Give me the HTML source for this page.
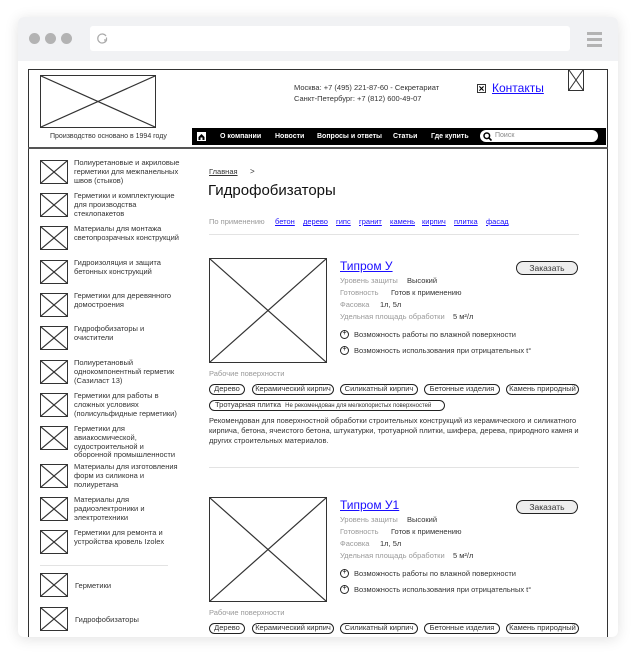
<!DOCTYPE html>
<html><head><meta charset="utf-8"><style>
*{margin:0;padding:0;box-sizing:border-box}
body{width:636px;height:657px;background:#fff;font-family:"Liberation Sans",sans-serif;position:relative;overflow:hidden}
.a{position:absolute}
.win{left:18px;top:17px;width:600px;height:620px;background:#fff;border-radius:6px;box-shadow:0 2px 14px rgba(0,0,0,.12);overflow:hidden}
.bar{left:0;top:0;width:600px;height:44px;background:#f1f2f4}
.dot{width:11px;height:11px;border-radius:50%;background:#b3b3b3;top:16px}
.url{left:72px;top:9px;width:480px;height:25px;background:#fff;border-radius:3px}
.hm{left:569px;width:15px;height:3px;background:#b3b3b3}
.box{left:10px;top:52px;width:580px;height:600px;border:1.5px solid #333}
.x{border:1.5px solid #333;background:#fff}
.x svg{position:absolute;left:0;top:0;width:100%;height:100%}
.t{font-size:7.5px;color:#333;line-height:9px;white-space:nowrap}
.g{color:#999}
.nav{left:174px;top:111px;width:414px;height:17px;background:#000}
.nav span{position:absolute;top:4.5px;color:#fff;font-size:7px;font-weight:bold;white-space:nowrap}
.lnk{color:#1a0dff;text-decoration:underline}
.tag{position:absolute;height:11px;border:1.3px solid #222;border-radius:6px;font-size:7.5px;line-height:8.5px;color:#333;padding:0 5px;white-space:nowrap}
.btn{position:absolute;left:498px;width:62px;height:14px;border:1.3px solid #222;border-radius:7px;background:#eee;font-size:8.5px;text-align:center;line-height:12px;color:#333}
.pl{position:absolute;width:9px;height:9px;border:1.3px solid #222;border-radius:50%;font-size:7px;line-height:6px;text-align:center}
.hr{position:absolute;height:1px;background:#e3e3e3}
</style></head><body>
<div class="a win">
<div class="a bar"></div>
<div class="a dot" style="left:11px"></div><div class="a dot" style="left:27px"></div><div class="a dot" style="left:43px"></div>
<div class="a url"><svg class="a" style="left:6px;top:6px" width="13" height="13" viewBox="0 0 13 13"><path d="M10 4A4.5 4.5 0 1 0 10.5 8" fill="none" stroke="#aaa" stroke-width="1.2"/><path d="M8 8l2.5 0 0-2.5" fill="none" stroke="#aaa" stroke-width="1.2"/></svg></div>
<div class="a hm" style="top:15px"></div><div class="a hm" style="top:21px"></div><div class="a hm" style="top:27px"></div>

<div class="a box"></div>
<div class="a x" style="left:22px;top:58px;width:116px;height:53px"><svg viewBox="0 0 100 100" preserveAspectRatio="none"><path d="M0 0L100 100M100 0L0 100" stroke="#333" stroke-width="1.2" vector-effect="non-scaling-stroke"/></svg></div>
<div class="a t" style="left:32px;top:115px;font-size:7px">Производство основано в 1994 году</div>
<div class="a t" style="left:276px;top:66px;font-size:7.5px">Москва: +7 (495) 221-87-60 - Секретариат</div>
<div class="a t" style="left:276px;top:77px;font-size:7.5px">Санкт-Петербург: +7 (812) 600-49-07</div>
<div class="a x" style="left:459px;top:67px;width:9px;height:9px"><svg viewBox="0 0 10 10"><path d="M2 2L8 8M8 2L2 8" stroke="#000" stroke-width="1.6"/></svg></div>
<div class="a lnk" style="left:474px;top:64px;font-size:12px">Контакты</div>
<div class="a x" style="left:550px;top:52px;width:16px;height:22px"><svg viewBox="0 0 100 100" preserveAspectRatio="none"><path d="M0 0L100 100M100 0L0 100" stroke="#333" vector-effect="non-scaling-stroke"/></svg></div>

<div class="a nav">
<svg class="a" style="left:5px;top:4px" width="9" height="9" viewBox="0 0 9 9"><rect x="0" y="0" width="9" height="9" fill="#fff"/><path d="M1.5 5L4.5 2 7.5 5V8H1.5Z" fill="#000"/><rect x="3.5" y="5.5" width="2" height="2.5" fill="#fff"/></svg>
<span style="left:28px">О компании</span><span style="left:83px">Новости</span><span style="left:125px">Вопросы и ответы</span><span style="left:201px">Статьи</span><span style="left:239px">Где купить</span>
<div class="a" style="left:288px;top:2px;width:118px;height:12px;background:#fff;border-radius:6px"><svg class="a" style="left:3px;top:2px" width="9" height="9" viewBox="0 0 9 9"><circle cx="3.8" cy="3.8" r="2.8" fill="none" stroke="#000" stroke-width="1.5"/><path d="M6 6L8.5 8.5" stroke="#000" stroke-width="1.6"/></svg><span style="left:15px;top:2px;color:#888;font-weight:normal;font-size:7px">Поиск</span></div>
</div>
<div class="a" style="left:10px;top:130px;width:580px;height:1.5px;background:#555"></div>

<div id="sb"></div>

<div class="a t lnk" style="left:191px;top:150px;color:#333;font-size:7.5px">Главная</div>
<div class="a t" style="left:232px;top:150px;font-size:8px">&gt;</div>
<div class="a" style="left:190px;top:165px;font-size:15px;color:#111">Гидрофобизаторы</div>
<div class="a t g" style="left:191px;top:200px">По применению</div>
<div class="a t lnk" style="left:257px;top:200px">бетон</div>
<div class="a t lnk" style="left:285px;top:200px">дерево</div>
<div class="a t lnk" style="left:318px;top:200px">гипс</div>
<div class="a t lnk" style="left:341px;top:200px">гранит</div>
<div class="a t lnk" style="left:372px;top:200px">камень</div>
<div class="a t lnk" style="left:404px;top:200px">кирпич</div>
<div class="a t lnk" style="left:436px;top:200px">плитка</div>
<div class="a t lnk" style="left:468px;top:200px">фасад</div>
<div class="hr" style="left:191px;top:217px;width:370px"></div>

<div id="p1"></div>
<div class="hr" style="left:191px;top:450px;width:370px"></div>
<div id="p2"></div>
</div>
<script>
var sb=[["Полиуретановые и акриловые","герметики для межпанельных","швов (стыков)"],["Герметики и комплектующие","для производства","стеклопакетов"],["Материалы для монтажа","светопрозрачных конструкций"],["Гидроизоляция и защита","бетонных конструкций"],["Герметики для деревянного","домостроения"],["Гидрофобизаторы и","очистители"],["Полиуретановый","однокомпонентный герметик","(Сазиласт 13)"],["Герметики для работы в","сложных условиях","(полисульфидные герметики)"],["Герметики для","авиакосмической,","судостроительной и","оборонной промышленности"],["Материалы для изготовления","форм из силикона и","полиуретана"],["Материалы для","радиоэлектроники и","электротехники"],["Герметики для ремонта и","устройства кровель Izolex"]];
var ys=[143,176,209,243,276,309,343,376,409,447,480,513];
var X='<svg viewBox="0 0 100 100" preserveAspectRatio="none"><path d="M0 0L100 100M100 0L0 100" stroke="#333" stroke-width="1.2" vector-effect="non-scaling-stroke"/></svg>';
var h='';
sb.forEach(function(l,i){var y=ys[i];h+='<div class="a x" style="left:22px;top:'+y+'px;width:28px;height:24px">'+X+'</div><div class="a t" style="left:56px;top:'+(y-1)+'px;line-height:8.8px">'+l.join('<br>')+'</div>';});
h+='<div class="hr" style="left:22px;top:548px;width:128px"></div>';
h+='<div class="a x" style="left:22px;top:556px;width:28px;height:24px">'+X+'</div><div class="a t" style="left:57px;top:564px">Герметики</div>';
h+='<div class="a x" style="left:22px;top:590px;width:28px;height:24px">'+X+'</div><div class="a t" style="left:57px;top:598px">Гидрофобизаторы</div>';
document.getElementById('sb').outerHTML=h;
function prod(id,top,name){var p='';
p+='<div class="a x" style="left:191px;top:'+top+'px;width:118px;height:105px">'+X+'</div>';
p+='<div class="a lnk" style="left:322px;top:'+(top+1)+'px;font-size:12px">'+name+'</div>';
p+='<div class="btn" style="top:'+(top+3)+'px">Заказать</div>';
var r=[["Уровень защиты","Высокий",67],["Готовность","Готов к применению",51],["Фасовка","1л, 5л",40],["Удельная площадь обработки","5 м²/л",113]];
var ry=[18,30,42,54];
r.forEach(function(a,i){p+='<div class="a t g" style="left:322px;top:'+(top+ry[i])+'px">'+a[0]+'</div><div class="a t" style="left:'+(322+a[2])+'px;top:'+(top+ry[i])+'px">'+a[1]+'</div>';});
p+='<div class="pl" style="left:322px;top:'+(top+72)+'px">+</div><div class="a t" style="left:336px;top:'+(top+72)+'px">Возможность работы по влажной поверхности</div>';
p+='<div class="pl" style="left:322px;top:'+(top+88)+'px">+</div><div class="a t" style="left:336px;top:'+(top+88)+'px">Возможность использования при отрицательных t°</div>';
p+='<div class="a t g" style="left:191px;top:'+(top+111)+'px">Рабочие поверхности</div>';
var tg=[["Дерево",191,36],["Керамический кирпич",234,82],["Силикатный кирпич",322,78],["Бетонные изделия",406,76],["Камень природный",488,73]];
tg.forEach(function(a){p+='<div class="tag" style="left:'+a[1]+'px;top:'+(top+126)+'px;width:'+a[2]+'px;text-align:center;padding:0">'+a[0]+'</div>';});
p+='<div class="tag" style="left:191px;top:'+(top+142)+'px;width:236px">Тротуарная плитка &nbsp;<span style="font-size:6px">Не рекомендован для мелкопористых поверхностей</span></div>';
p+='<div class="a t" style="left:191px;top:'+(top+158)+'px;line-height:10px">Рекомендован для поверхностной обработки строительных конструкций из керамического и силикатного<br>кирпича, бетона, ячеистого бетона, штукатурки, тротуарной плитки, шифера, дерева, природного камня и<br>других строительных материалов.</div>';
document.getElementById(id).outerHTML=p;}
prod('p1',241,'Типром У');prod('p2',480,'Типром У1');
</script>
</body></html>
